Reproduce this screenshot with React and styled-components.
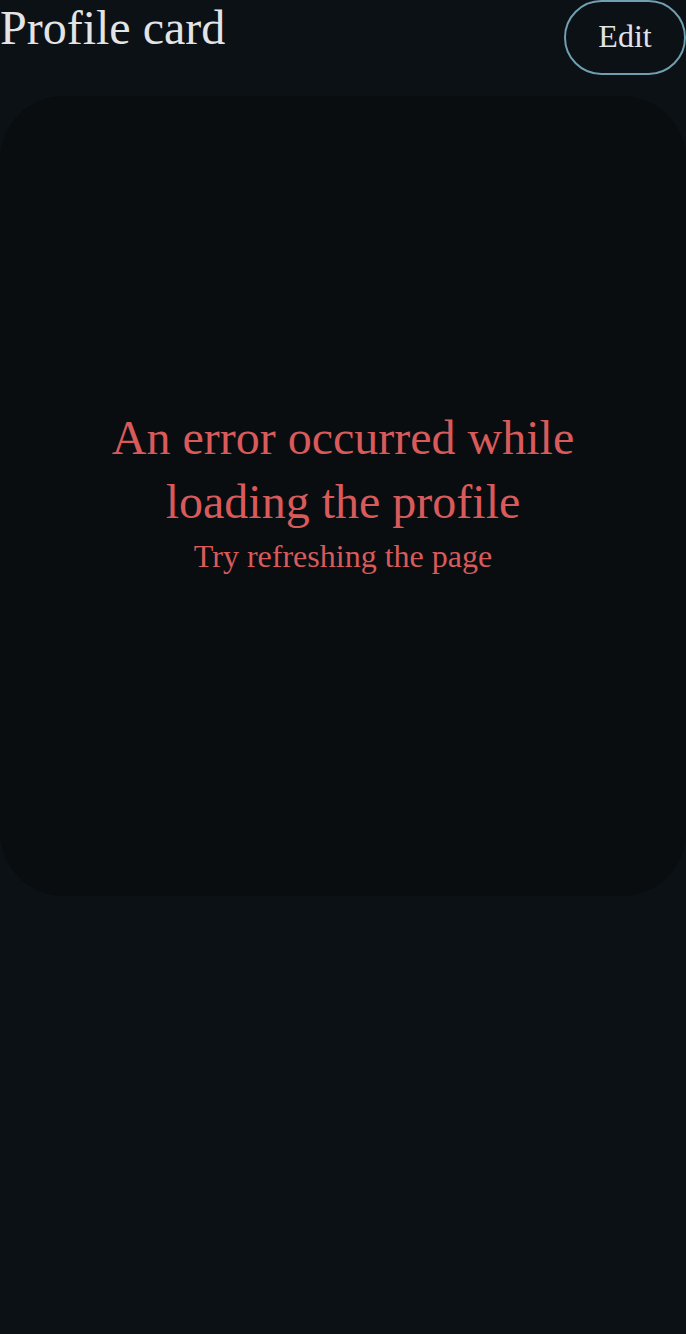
import React from 'react';
import styled, { createGlobalStyle } from 'styled-components';

const GlobalStyle = createGlobalStyle`
  html, body {
    margin: 0;
    padding: 0;
    background-color: #0c1115;
  }
  body {
    font-family: "Liberation Serif", "Times New Roman", serif;
  }
`;

const Page = styled.div`
  width: 686px;
  min-height: 1334px;
  background-color: #0c1115;
  display: flex;
  flex-direction: column;
  gap: 21px;
`;

const Header = styled.header`
  display: flex;
  justify-content: space-between;
  align-items: flex-start;
`;

const Title = styled.h1`
  margin: 0;
  font-size: 48px;
  font-weight: 400;
  line-height: 1.15;
  color: #e2e4e6;
`;

const EditButton = styled.button`
  width: 122px;
  height: 75px;
  padding: 0 0 3px;
  border: 2px solid #6f9fb1;
  border-radius: 38px;
  background: transparent;
  color: #e2e4e6;
  font-family: inherit;
  font-size: 32px;
  cursor: pointer;
`;

const Card = styled.section`
  height: 800px;
  box-sizing: border-box;
  padding-bottom: 12px;
  border-radius: 64px;
  background-color: #090d10;
  display: flex;
  flex-direction: column;
  align-items: center;
  justify-content: center;
  text-align: center;
  gap: 4px;
`;

const ErrorTitle = styled.h2`
  margin: 0;
  width: 480px;
  font-size: 48px;
  font-weight: 400;
  line-height: 64px;
  color: #d95a5a;
`;

const ErrorHint = styled.p`
  margin: 0;
  font-size: 32px;
  line-height: 37px;
  color: #d95a5a;
`;

export default function App() {
  return (
    <>
      <GlobalStyle />
      <Page>
        <Header>
          <Title>Profile card</Title>
          <EditButton type="button">Edit</EditButton>
        </Header>
        <Card>
          <ErrorTitle>An error occurred while loading the profile</ErrorTitle>
          <ErrorHint>Try refreshing the page</ErrorHint>
        </Card>
      </Page>
    </>
  );
}
